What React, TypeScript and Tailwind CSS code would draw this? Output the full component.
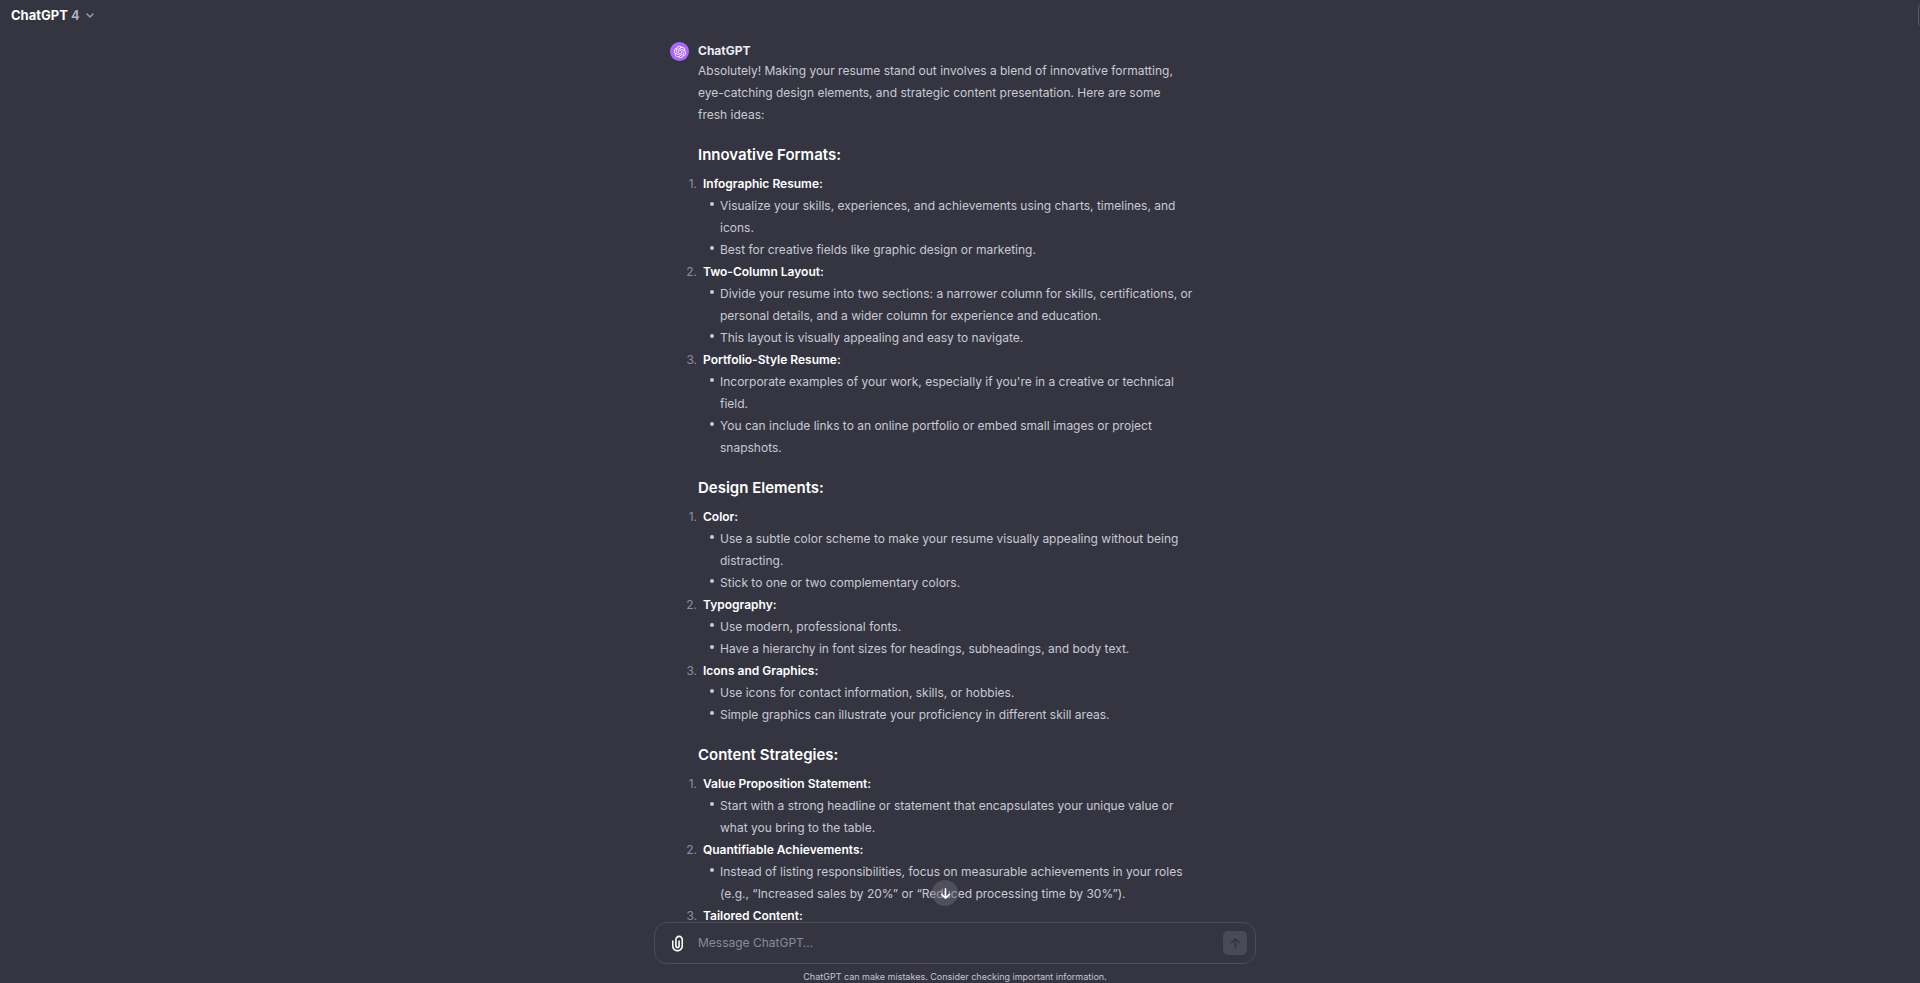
import { SiOpenai } from "react-icons/si";

type Item = { title: string; points: string[] };
type Section = { heading: string; items: Item[] };

const sections: Section[] = [
  {
    heading: "Innovative Formats:",
    items: [
      {
        title: "Infographic Resume:",
        points: [
          "Visualize your skills, experiences, and achievements using charts, timelines, and icons.",
          "Best for creative fields like graphic design or marketing.",
        ],
      },
      {
        title: "Two-Column Layout:",
        points: [
          "Divide your resume into two sections: a narrower column for skills, certifications, or personal details, and a wider column for experience and education.",
          "This layout is visually appealing and easy to navigate.",
        ],
      },
      {
        title: "Portfolio-Style Resume:",
        points: [
          "Incorporate examples of your work, especially if you're in a creative or technical field.",
          "You can include links to an online portfolio or embed small images or project snapshots.",
        ],
      },
    ],
  },
  {
    heading: "Design Elements:",
    items: [
      {
        title: "Color:",
        points: [
          "Use a subtle color scheme to make your resume visually appealing without being distracting.",
          "Stick to one or two complementary colors.",
        ],
      },
      {
        title: "Typography:",
        points: [
          "Use modern, professional fonts.",
          "Have a hierarchy in font sizes for headings, subheadings, and body text.",
        ],
      },
      {
        title: "Icons and Graphics:",
        points: [
          "Use icons for contact information, skills, or hobbies.",
          "Simple graphics can illustrate your proficiency in different skill areas.",
        ],
      },
    ],
  },
  {
    heading: "Content Strategies:",
    items: [
      {
        title: "Value Proposition Statement:",
        points: [
          "Start with a strong headline or statement that encapsulates your unique value or what you bring to the table.",
        ],
      },
      {
        title: "Quantifiable Achievements:",
        points: [
          "Instead of listing responsibilities, focus on measurable achievements in your roles (e.g., “Increased sales by 20%” or “Reduced processing time by 30%”).",
        ],
      },
      { title: "Tailored Content:", points: [] },
    ],
  },
];

function Header() {
  return (
    <header className="flex h-[30px] shrink-0 items-center justify-between overflow-hidden pl-[11px]">
      <button type="button" className="flex items-center text-[13px] leading-5 font-bold text-white">
        ChatGPT
        <span className="ml-[3px] font-semibold text-[#b4b4c8]">4</span>
        <svg className="ml-1 size-3 text-[#9a9aa8]" viewBox="0 0 12 12" fill="none" stroke="currentColor" strokeWidth="1.5" strokeLinecap="round" strokeLinejoin="round" aria-hidden="true">
          <path d="M3 5l3 3 3-3" />
        </svg>
      </button>
      <button type="button" aria-label="Share chat" className="-mr-6 size-[26px] rounded-md border border-[#565869]" />
    </header>
  );
}

function Message() {
  return (
    <article className="mx-auto flex w-full max-w-[570px] gap-[9px] pt-3">
      <div className="flex size-[19px] shrink-0 items-center justify-center rounded-full bg-[#ab68ff] text-white">
        <SiOpenai className="size-3" aria-hidden="true" />
      </div>
      <div className="min-w-0 flex-1 pr-[46px]">
        <h2 className="text-[12px] leading-[18px] font-bold text-[#ececf1]">ChatGPT</h2>
        <p className="pr-3">
          Absolutely! Making your resume stand out involves a blend of innovative formatting, eye-catching
          design elements, and strategic content presentation. Here are some fresh ideas:
        </p>
        {sections.map((section) => (
          <section key={section.heading}>
            <h3 className="mt-[18px] mb-[7px] text-[15px] leading-[22px] font-semibold text-white">
              {section.heading}
            </h3>
            <ol>
              {section.items.map((item, i) => (
                <li key={item.title}>
                  <div className="-ml-3 flex gap-[6px]">
                    <span className="w-[11px] shrink-0 text-right text-[#8e8ea0]">{i + 1}.</span>
                    <strong className="font-semibold text-white">{item.title}</strong>
                  </div>
                  <ul className="pl-3">
                    {item.points.map((point) => (
                      <li key={point} className="flex gap-[6px]">
                        <span className="mt-[7px] size-1 shrink-0 rounded-full bg-[#c9cad3]" />
                        <span>{point}</span>
                      </li>
                    ))}
                  </ul>
                </li>
              ))}
            </ol>
          </section>
        ))}
      </div>
    </article>
  );
}

function Composer() {
  return (
    <footer className="shrink-0 pr-[10px]">
      <form
        className="relative mx-auto flex h-[42px] w-full max-w-[602px] items-center rounded-[13px] border border-[#4b4c58] pr-2 pl-[13px]"
        onSubmit={(e) => e.preventDefault()}
      >
        <button
          type="button"
          aria-label="Scroll to bottom"
          className="absolute -top-[43px] left-1/2 -ml-[23px] flex size-[26px] items-center justify-center rounded-full bg-[#6b6c78]/50 text-white"
        >
          <svg className="size-[19px]" viewBox="0 0 24 24" fill="none" stroke="currentColor" strokeWidth="2" strokeLinecap="round" strokeLinejoin="round" aria-hidden="true">
            <path d="M17 13L12 18L7 13M12 6L12 17" />
          </svg>
        </button>
        <button type="button" aria-label="Attach files" className="text-white">
          <svg className="size-[19px]" viewBox="0 0 24 24" fill="currentColor" aria-hidden="true">
            <path
              fillRule="evenodd"
              clipRule="evenodd"
              d="M9 7C9 4.23858 11.2386 2 14 2C16.7614 2 19 4.23858 19 7V15C19 18.866 15.866 22 12 22C8.13401 22 5 18.866 5 15V9C5 8.44772 5.44772 8 6 8C6.55228 8 7 8.44772 7 9V15C7 17.7614 9.23858 20 12 20C14.7614 20 17 17.7614 17 15V7C17 5.34315 15.6569 4 14 4C12.3431 4 11 5.34315 11 7V15C11 15.5523 11.4477 16 12 16C12.5523 16 13 15.5523 13 15V9C13 8.44772 13.4477 8 14 8C14.5523 8 15 8.44772 15 9V15C15 16.6569 13.6569 18 12 18C10.3431 18 9 16.6569 9 15V7Z"
            />
          </svg>
        </button>
        <input
          type="text"
          aria-label="Message ChatGPT"
          placeholder="Message ChatGPT…"
          className="ml-[11px] min-w-0 flex-1 bg-transparent text-[12px] leading-5 text-white outline-none placeholder:text-[#8a8a94]"
        />
        <button
          type="submit"
          aria-label="Send message"
          className="flex size-6 items-center justify-center rounded-[5px] bg-[#494a55] text-[#343541]"
        >
          <svg className="size-[19px]" viewBox="0 0 24 24" fill="none" stroke="currentColor" strokeWidth="2" strokeLinecap="round" strokeLinejoin="round" aria-hidden="true">
            <path d="M7 11L12 6L17 11M12 18V7" />
          </svg>
        </button>
      </form>
      <p className="pt-[6px] text-center text-[9px] leading-[13px] text-[#c5c5d2]">
        ChatGPT can make mistakes. Consider checking important information.
      </p>
    </footer>
  );
}

export default function App() {
  return (
    <div className="flex h-screen flex-col overflow-hidden bg-[#343541] font-['Inter',sans-serif] text-[12px] leading-[22px] text-[#c9cad3]">
      <Header />
      <main className="min-h-0 flex-1 overflow-hidden pr-[10px]">
        <Message />
      </main>
      <Composer />
    </div>
  );
}
